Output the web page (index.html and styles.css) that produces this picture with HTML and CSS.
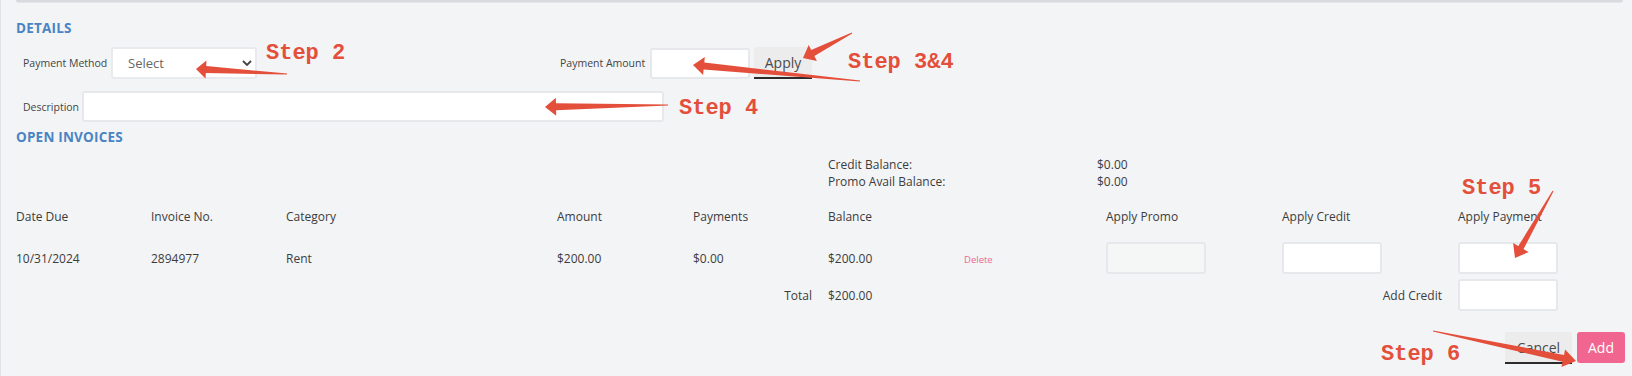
FILE: index.html
```html
<!DOCTYPE html>
<html lang="en">
<head>
    <meta charset="UTF-8">
    <meta name="viewport" content="width=device-width, initial-scale=1.0">
    <title>Add Payment</title>
    <link rel="stylesheet" href="styles.css">
</head>
<body>

    <div class="top-strip"></div>

    <div class="panel">
        <h2 class="section-title details-title">DETAILS</h2>

        <div class="form-row">
            <label class="field-label method-label">Payment Method</label>
            <div class="select-wrap">
                <select class="select-box">
                    <option>Select</option>
                </select>
                <svg class="chevron" width="10" height="6" viewBox="0 0 10 6"><path d="M1 1l4 4 4-4"/></svg>
            </div>
            <label class="field-label amount-label">Payment Amount</label>
            <input class="text-input amount-input" type="text">
            <button class="btn btn-light apply-btn">Apply</button>
        </div>

        <div class="form-row desc-row">
            <label class="field-label desc-label">Description</label>
            <input class="text-input desc-input" type="text">
        </div>

        <h2 class="section-title invoices-title">OPEN INVOICES</h2>

        <div class="balances">
            <span>Credit Balance:</span><span>$0.00</span>
            <span>Promo Avail Balance:</span><span>$0.00</span>
        </div>

        <div class="inv-row inv-head">
            <span>Date Due</span>
            <span>Invoice No.</span>
            <span>Category</span>
            <span>Amount</span>
            <span>Payments</span>
            <span>Balance</span>
            <span></span>
            <span>Apply Promo</span>
            <span>Apply Credit</span>
            <span>Apply Payment</span>
        </div>

        <div class="inv-row inv-data">
            <span>10/31/2024</span>
            <span>2894977</span>
            <span>Rent</span>
            <span>$200.00</span>
            <span>$0.00</span>
            <span>$200.00</span>
            <span><a class="delete-link">Delete</a></span>
            <span><input class="text-input cell-input promo-input" type="text" disabled></span>
            <span><input class="text-input cell-input" type="text"></span>
            <span><input class="text-input cell-input" type="text"></span>
        </div>

        <div class="inv-row inv-total">
            <span></span>
            <span></span>
            <span></span>
            <span></span>
            <span class="right-cell">Total</span>
            <span>$200.00</span>
            <span></span>
            <span></span>
            <span class="right-cell">Add Credit</span>
            <span><input class="text-input cell-input" type="text"></span>
        </div>

        <div class="actions">
            <button class="btn btn-light cancel-btn">Cancel</button>
            <button class="btn btn-pink add-btn">Add</button>
        </div>
    </div>

    <!-- step annotations drawn over the form -->
    <svg class="annotations" width="1632" height="376" viewBox="0 0 1632 376">
        <g class="arrow">
            <polygon points="196,69 206.5,60.6 206.2,66.1 287,73.5 287,74.5 205.8,73 205.5,78.5"/>
            <polygon points="803,58 808.7,45 811.2,49.9 851.8,32.6 852.2,33.4 814.4,56.1 816.9,61"/>
            <polygon points="693,65 704.8,57.1 704.3,62.6 860.1,80.4 859.9,81.6 703.6,69.5 703.1,75"/>
            <polygon points="545,107 555.9,97.8 555.9,103.3 668,104.4 668,105.6 556.1,110.3 556.2,115.8"/>
            <polygon points="1515,258 1513.1,243.1 1518.3,246.1 1552.5,190.7 1553.5,191.3 1523.5,249.1 1528.7,252"/>
            <polygon points="1576,361 1561.4,367.1 1562.6,361.7 1432.9,331.6 1433.1,330.4 1564,354.9 1565.1,349.5"/>
        </g>
        <text class="step-label" x="266" y="59">Step 2</text>
        <text class="step-label" x="848" y="68">Step 3&amp;4</text>
        <text class="step-label" x="679" y="114">Step 4</text>
        <text class="step-label" x="1462" y="194">Step 5</text>
        <text class="step-label" x="1381" y="360">Step 6</text>
    </svg>

</body>
</html>
```

FILE: styles.css
```css
body {
    margin: 0;
    font-family: "Open Sans", Arial, sans-serif;
    color: #3c3c3c;
    background: #f3f4f6;
    border-left: 1px solid #e1e2e5;
    height: 376px;
    box-sizing: border-box;
    overflow: hidden;
}

.top-strip {
    height: 3px;
    margin: 0 9px 0 15px;
    background: #d8dadd;
    border-bottom: 1px solid #e4e5e8;
    border-radius: 0 0 3px 3px;
    box-sizing: border-box;
}

.panel {
    padding: 0 7px 0 15px;
}

.section-title {
    margin: 16px 0 0;
    font-size: 13.5px;
    line-height: 18px;
    font-weight: 700;
    color: #4a84c3;
    letter-spacing: 0.2px;
}

.invoices-title {
    margin-top: 6px;
}

.form-row {
    display: flex;
    align-items: center;
    height: 32px;
    margin-top: 10px;
}

.desc-row {
    margin-top: 12px;
    height: 31px;
}

.field-label {
    font-size: 10.5px;
    color: #444;
    flex-shrink: 0;
}

.method-label {
    margin-left: 7px;
    width: 88px;
}

.desc-label {
    margin-left: 7px;
    width: 59px;
}

.amount-label {
    margin-left: 303px;
    width: 90px;
}

.select-wrap {
    position: relative;
    width: 146px;
    height: 32px;
}

.select-box {
    appearance: none;
    -webkit-appearance: none;
    width: 100%;
    height: 100%;
    padding: 0 0 0 15px;
    font-family: "Open Sans", Arial, sans-serif;
    font-size: 13px;
    color: #666;
    background: #fff;
    border: 2px solid #e8eaed;
    border-radius: 3px;
    box-sizing: border-box;
}

.chevron {
    position: absolute;
    top: 13px;
    right: 5px;
    fill: none;
    stroke: #444;
    stroke-width: 1.8;
}

.text-input {
    height: 31px;
    background: #fff;
    border: 2px solid #e6e8eb;
    border-radius: 3px;
    box-sizing: border-box;
    font-family: "Open Sans", Arial, sans-serif;
}

.amount-input {
    width: 100px;
}

.desc-input {
    width: 582px;
    height: 31px;
}

.btn {
    font-family: "Open Sans", Arial, sans-serif;
    font-size: 14px;
    border: none;
    cursor: pointer;
    height: 32px;
    box-sizing: border-box;
}

.btn-light {
    background: #ececed;
    color: #4a4a4a;
    border-bottom: 2px solid #2b2b2b;
    border-radius: 3px 3px 0 0;
}

.apply-btn {
    margin-left: 4px;
    width: 58px;
    padding: 0;
}

.balances {
    display: grid;
    grid-template-columns: 269px auto;
    margin: 10px 0 0 812px;
    font-size: 12px;
    line-height: 17px;
}

.inv-row {
    display: grid;
    grid-template-columns: 135px 135px 271px 136px 135px 136px 142px 176px 176px 1fr;
    align-items: center;
    font-size: 12px;
}

.inv-head {
    height: 20px;
    margin-top: 16px;
}

.inv-data {
    height: 32px;
    margin-top: 16px;
}

.inv-total {
    height: 32px;
    margin-top: 5px;
}

.right-cell {
    text-align: right;
    padding-right: 16px;
}

.delete-link {
    font-size: 9.5px;
    color: #ec6a92;
    cursor: pointer;
}

.cell-input {
    display: block;
    width: 100px;
    height: 32px;
}

.promo-input {
    background: #f5f6f6;
}

.actions {
    display: flex;
    justify-content: flex-end;
    gap: 5px;
    margin-top: 21px;
}

.cancel-btn {
    width: 67px;
    padding: 0;
}

.btn-pink {
    background: #f06690;
    color: #fff;
    border-radius: 3px;
}

.add-btn {
    width: 48px;
    height: 31px;
    padding: 0;
}

.annotations {
    position: absolute;
    top: 0;
    left: 0;
    pointer-events: none;
}

.arrow polygon {
    fill: #e34f3a;
}

.step-label {
    font-family: "Liberation Mono", "DejaVu Sans Mono", monospace;
    font-weight: 700;
    font-size: 22px;
    fill: #e34f3a;
}
```
